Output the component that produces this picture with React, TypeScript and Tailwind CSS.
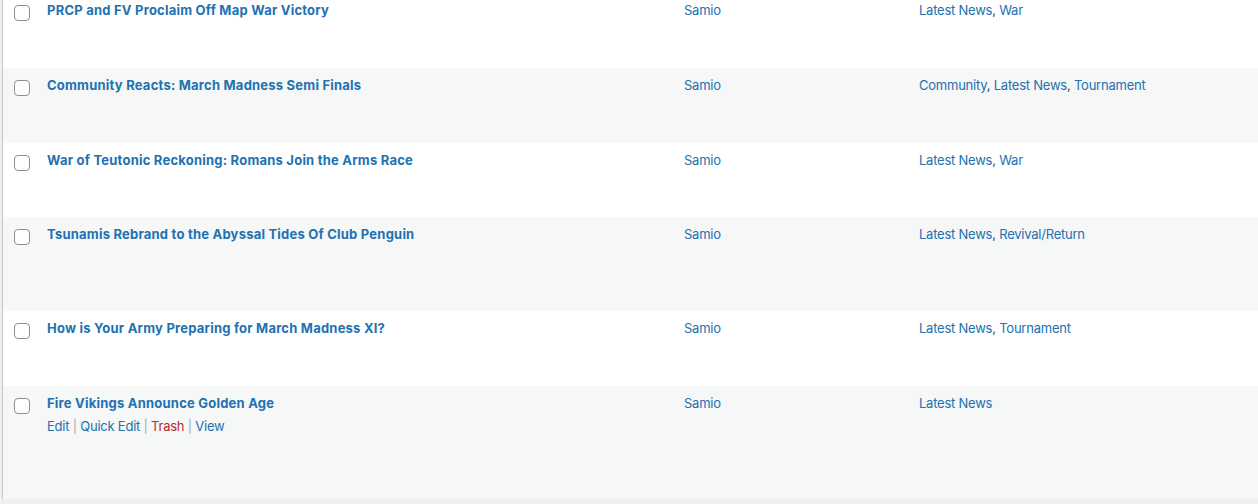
import React from "react";

type Row = {
  title: string;
  cats: string[];
  h: number;
  actions?: boolean;
};

const rows: Row[] = [
  { title: "PRCP and FV Proclaim Off Map War Victory", cats: ["Latest News", "War"], h: 75 },
  { title: "Community Reacts: March Madness Semi Finals", cats: ["Community", "Latest News", "Tournament"], h: 75 },
  { title: "War of Teutonic Reckoning: Romans Join the Arms Race", cats: ["Latest News", "War"], h: 74 },
  { title: "Tsunamis Rebrand to the Abyssal Tides Of Club Penguin", cats: ["Latest News", "Revival/Return"], h: 94 },
  { title: "How is Your Army Preparing for March Madness XI?", cats: ["Latest News", "Tournament"], h: 75 },
  { title: "Fire Vikings Announce Golden Age", cats: ["Latest News"], h: 113, actions: true },
];

export default function App() {
  return (
    <div
      className="w-[1258px] h-[504px] overflow-hidden bg-[#f0f0f1] text-[13px] text-[#3c434a] tracking-[-0.23px]"
      style={{ fontFamily: "Inter, 'Noto Sans', sans-serif" }}
    >
      <div className="ml-[2px] -mt-[7px] w-[1400px] border-l border-[#c3c4c7] bg-white">
        {rows.map((r, i) => (
          <div
            key={i}
            className={`flex ${i % 2 === 1 ? "bg-[#f6f7f7]" : "bg-white"}`}
            style={{ height: r.h }}
          >
            <div className="w-[34px] shrink-0 pl-[11px] pt-[12px]">
              <div className="w-[16px] h-[16px] rounded-[4px] border border-[#8c8f94] bg-white" />
            </div>
            <div className="w-[637px] shrink-0 pl-[10px] pt-[8px]">
              <div className="h-[18px] leading-[18px] font-bold text-[13px] tracking-[0.22px] text-[#2271b1]">{r.title}</div>
              {r.actions && (
                <div className="mt-[5px] leading-[18px] text-[13px] text-[#2271b1]">
                  <span>Edit</span>
                  <span className="text-[#a7aaad]"> | </span>
                  <span>Quick Edit</span>
                  <span className="text-[#a7aaad]"> | </span>
                  <span className="text-[#b32d2e]">Trash</span>
                  <span className="text-[#a7aaad]"> | </span>
                  <span>View</span>
                </div>
              )}
            </div>
            <div className="w-[235px] shrink-0 pl-[10px] pt-[8px] leading-[18px] text-[#2271b1]">Samio</div>
            <div className="flex-1 pl-[10px] pt-[8px] leading-[18px]">
              {r.cats.map((c, j) => (
                <React.Fragment key={j}>
                  <span className="text-[#2271b1]">{c}</span>
                  {j < r.cats.length - 1 && <span className="text-[#3c434a]">, </span>}
                </React.Fragment>
              ))}
            </div>
          </div>
        ))}
      </div>
    </div>
  );
}
